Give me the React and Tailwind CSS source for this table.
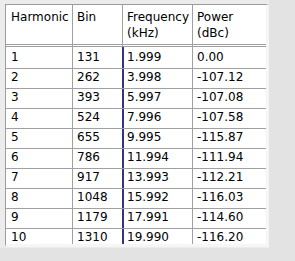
import React from "react";

const rows = [
  ["1", "131", "1.999", "0.00"],
  ["2", "262", "3.998", "-107.12"],
  ["3", "393", "5.997", "-107.08"],
  ["4", "524", "7.996", "-107.58"],
  ["5", "655", "9.995", "-115.87"],
  ["6", "786", "11.994", "-111.94"],
  ["7", "917", "13.993", "-112.21"],
  ["8", "1048", "15.992", "-116.03"],
  ["9", "1179", "17.991", "-114.60"],
  ["10", "1310", "19.990", "-116.20"],
];

export default function App() {
  return (
    <div
      className="w-[295px] h-[261px] bg-[#e3e3e3] overflow-hidden text-black"
      style={{ fontFamily: '"DejaVu Sans", sans-serif' }}
    >
      <div className="w-[269px] h-[248px] bg-[#ececec] pl-[5px] pt-[4px]">
        <div className="w-[264px] h-[243px] border-t border-l border-[#9c9c9c] border-r-[3px] border-b-[3px] border-r-[#f6f6f6] border-b-[#f6f6f6] bg-white">
          <div className="w-[260px] h-[239px] overflow-hidden text-[12px] leading-[16px]">
            {/* header */}
            <div className="flex h-[40px] border-b border-[#a0a0a0]">
              <div className="w-[67px] border-r border-[#a0a0a0] pl-[5px] pt-[4px]">Harmonic</div>
              <div className="w-[50px] border-r border-[#a0a0a0] pl-[4px] pt-[4px]">Bin</div>
              <div className="w-[70px] border-r border-[#a0a0a0] pl-[4px] pt-[4px] whitespace-nowrap overflow-hidden">
                Frequency
                <br />
                (kHz)
              </div>
              <div className="flex-1 pl-[4px] pt-[4px]">
                Power
                <br />
                (dBc)
              </div>
            </div>
            <div className="flex h-[2px] border-b border-[#a0a0a0]">
              <div className="w-[67px] border-r border-[#a0a0a0]" />
              <div className="w-[50px] border-r border-[#a0a0a0]" />
              <div className="w-[70px] border-r border-[#a0a0a0]" />
            </div>
            <div className="flex h-[2px]">
              <div className="w-[67px] border-r border-[#a0a0a0]" />
              <div className="w-[51px] border-r-2 border-[#34347e]" />
              <div className="w-[69px] border-r border-[#a0a0a0]" />
            </div>
            {rows.map((r, i) => (
              <div key={i} className="flex h-[20px] border-b border-[#a0a0a0]">
                <div className="w-[67px] border-r border-[#a0a0a0] pl-[5px]">{r[0]}</div>
                <div className="w-[51px] border-r-2 border-[#34347e] pl-[4px]">{r[1]}</div>
                <div className="w-[69px] border-r border-[#a0a0a0] pl-[3px]">{r[2]}</div>
                <div className="flex-1 pl-[4px]">{r[3]}</div>
              </div>
            ))}
          </div>
        </div>
      </div>
    </div>
  );
}
